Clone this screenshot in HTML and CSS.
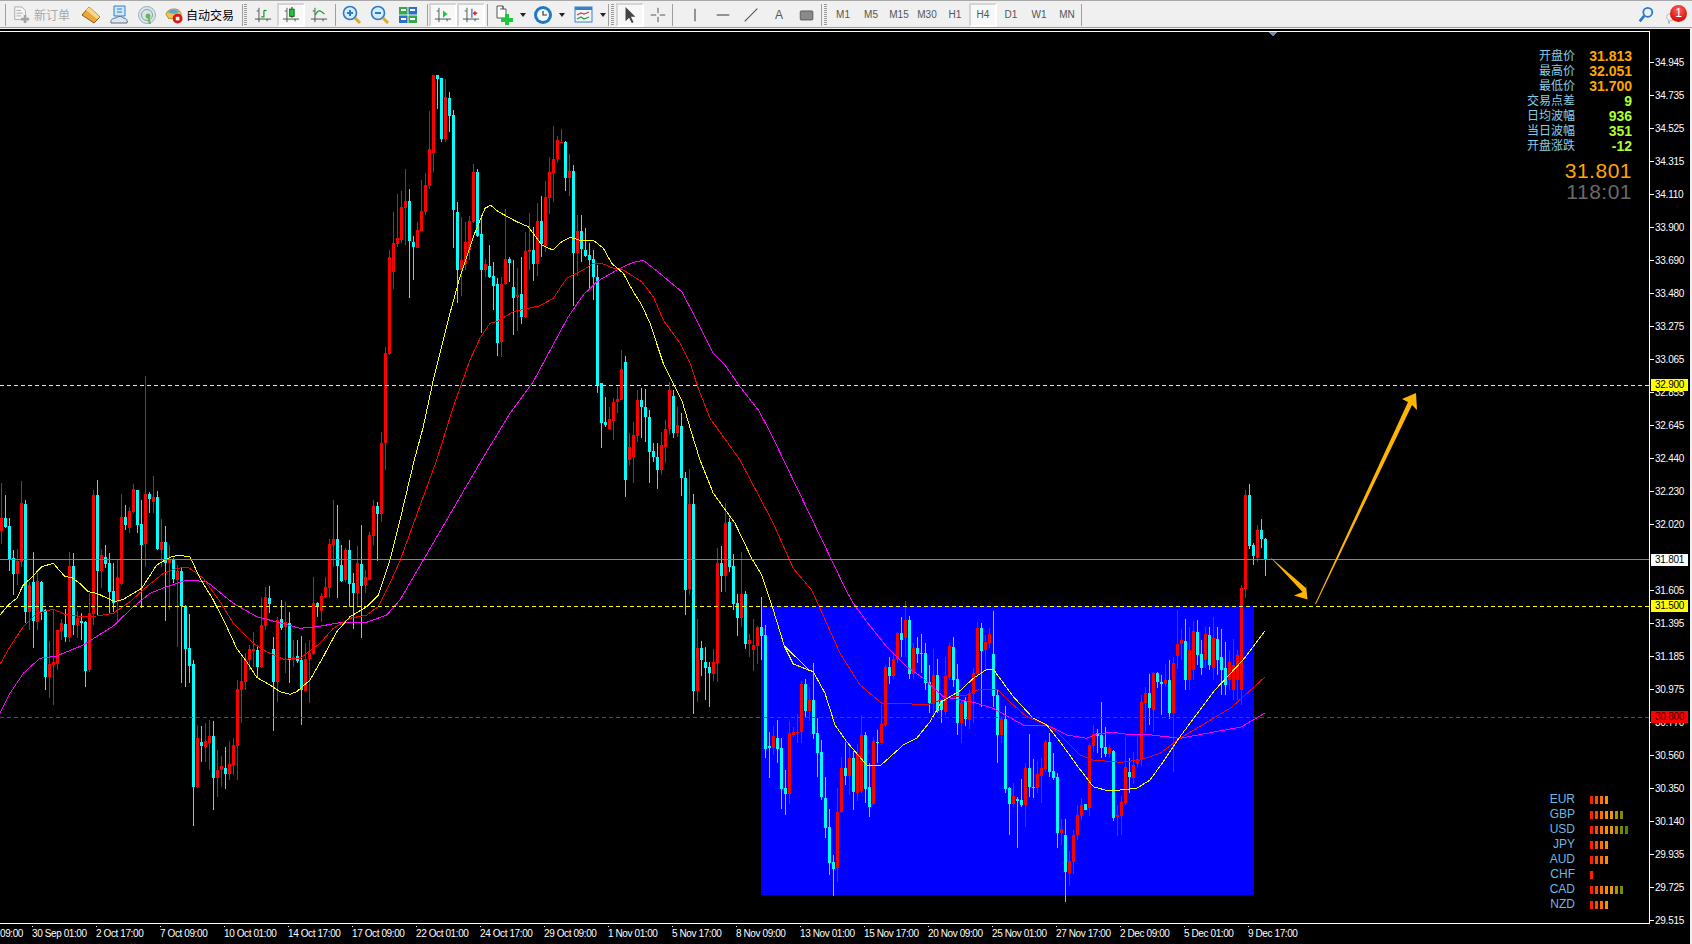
FILE: index.html
```html
<!DOCTYPE html>
<html lang="zh">
<head>
<meta charset="utf-8">
<title>XAG H4</title>
<link rel="stylesheet" href="styles.css">
</head>
<body>
<svg class="defs" width="0" height="0">
  <symbol id="axes" viewBox="0 0 20 20"><path d="M5.5 2V18M1 14.5H19M3 5.5H5M14.5 14.5V17" fill="none" stroke="#3c4a44" stroke-width="1"/></symbol>
</svg>
<header class="toolbar">
  <i class="sep"></i>
  <div class="btn btn-new">
    <svg class="ic" viewBox="0 0 20 20"><path d="M3 1H11L15 5V15H3Z" fill="#f4f4f4" stroke="#a8a8a8"/><path d="M5 5H10M5 8H12M5 11H10" stroke="#a8a8a8"/><path d="M13 10H16V13H19V16H16V19H13V16H10V13H13Z" fill="#a4a4a4"/></svg>
    <span class="cap cap-off">新订单</span>
  </div>
  <div class="btn"><svg class="ic ic-l" viewBox="0 0 20 20"><path d="M1 10L8 2L19 12L13 18Z" fill="#e9a93a" stroke="#8a5a16"/><path d="M8 2L19 12L16 14L5 5Z" fill="#f8d88a"/></svg></div>
  <div class="btn"><svg class="ic ic-l" viewBox="0 0 20 20"><path d="M5 1H16V11H5Z" fill="#cfe6fb" stroke="#2f7fd0"/><path d="M8 4H13M8 7H13" stroke="#2f7fd0"/><path d="M2 18C1 14 5 13 7 13C9 11 13 11 14 13C17 13 19 15 18 18Z" fill="#dfe6ee" stroke="#55708f"/></svg></div>
  <div class="btn"><svg class="ic ic-l" viewBox="0 0 20 20"><circle cx="10" cy="10" r="8.5" fill="#dce6e6" stroke="#9ab0b8"/><circle cx="10" cy="10" r="5.5" fill="none" stroke="#6fa6b8"/><circle cx="11" cy="11" r="2.5" fill="#6cb65a"/><path d="M11 11L13 19" stroke="#6cb65a" stroke-width="2"/></svg></div>
  <div class="btn btn-auto">
    <svg class="ic" viewBox="0 0 20 20"><path d="M1 9C3 2 15 1 18 8L17 14H4Z" fill="#f0c24a" stroke="#b4862a"/><path d="M3 7C6 3 13 3 16 7C12 9 7 9 3 7Z" fill="#5aa6d8"/><circle cx="14" cy="14" r="5.5" fill="#d81a10"/><rect x="12" y="12" width="4" height="4" fill="#fff"/></svg>
    <span class="cap">自动交易</span>
  </div>
  <i class="sep sep-b"></i><i class="grip grip-a"></i>
  <div class="btn"><svg class="ic" viewBox="0 0 20 20"><use href="#axes"/><path d="M11 5V12H8" fill="none" stroke="#12a02a" stroke-width="1.4"/><path d="M11 5H14" stroke="#12a02a" stroke-width="1.4"/></svg></div>
  <div class="btn on"><svg class="ic" viewBox="0 0 20 20"><use href="#axes"/><path d="M11 1V13" stroke="#111"/><rect x="8.5" y="3.5" width="5" height="8" fill="#1fc83a" stroke="#0a5a18"/></svg></div>
  <div class="btn"><svg class="ic" viewBox="0 0 20 20"><use href="#axes"/><path d="M6 10C9 3 12 5 16 9" fill="none" stroke="#1f9a3a" stroke-width="1.4"/></svg></div>
  <i class="sep sep-m"></i>
  <div class="btn btn-l"><svg class="ic ic-l" viewBox="0 0 20 20"><circle cx="8" cy="8" r="6.5" fill="#d6ecff" stroke="#2c7cc8" stroke-width="1.6"/><path d="M5 8H11M8 5V11" stroke="#2c7cc8" stroke-width="2"/><path d="M13 13L18 18" stroke="#d8ac2c" stroke-width="3"/></svg></div>
  <div class="btn"><svg class="ic ic-l" viewBox="0 0 20 20"><circle cx="8" cy="8" r="6.5" fill="#d6ecff" stroke="#2c7cc8" stroke-width="1.6"/><path d="M5 8H11" stroke="#2c7cc8" stroke-width="2"/><path d="M13 13L18 18" stroke="#d8ac2c" stroke-width="3"/></svg></div>
  <div class="btn"><svg class="ic ic-l" viewBox="0 0 20 20"><rect x="1" y="2" width="8.5" height="7.5" fill="#35a84a"/><rect x="10.5" y="2" width="8.5" height="7.5" fill="#2a6fd0"/><rect x="1" y="10.5" width="8.5" height="7.5" fill="#2a6fd0"/><rect x="10.5" y="10.5" width="8.5" height="7.5" fill="#35a84a"/><path d="M3 5H8M12 5H17M3 14H8M12 14H17" stroke="#fff" stroke-width="2"/></svg></div>
  <i class="sep sep-w"></i>
  <div class="btn on"><svg class="ic" viewBox="0 0 20 20"><use href="#axes"/><path d="M10 5L15 9L10 13Z" fill="#1ec83a"/></svg></div>
  <div class="btn on"><svg class="ic" viewBox="0 0 20 20"><use href="#axes"/><path d="M11 3V13" stroke="#2a6fd0" stroke-width="1.4"/><path d="M17 8H13M15 6L13 8L15 10" fill="none" stroke="#e0261a" stroke-width="1.6"/></svg></div>
  <i class="sep sep-m"></i>
  <div class="btn btn-l"><svg class="ic ic-l" viewBox="0 0 20 20"><path d="M3 1H9V4H12V13H3Z" fill="#fff" stroke="#555"/><path d="M6 4H9V1" fill="none" stroke="#555"/><path d="M11 9H15V13H19V17H15V20H11V17H7V13H11Z" fill="#1ec83a"/></svg></div><i class="drop"></i>
  <div class="btn btn-clock"><svg class="ic ic-l" viewBox="0 0 20 20"><circle cx="10" cy="10" r="9" fill="#1f78c8"/><circle cx="10" cy="10" r="6" fill="#f4f8fc"/><path d="M10 6V10H14" fill="none" stroke="#333" stroke-width="1.2"/></svg></div><i class="drop"></i>
  <div class="btn btn-tpl"><svg class="ic ic-l" viewBox="0 0 20 20"><rect x="1" y="2" width="17" height="15" fill="#eef5fc" stroke="#3a80c8"/><rect x="1" y="2" width="17" height="3" fill="#3a80c8"/><path d="M3 10L7 8L10 9L15 7" fill="none" stroke="#d8402a" stroke-width="1.3"/><path d="M3 14L7 12L10 14L15 12" fill="none" stroke="#2a9a3a" stroke-width="1.3"/></svg></div><i class="drop"></i>
  <i class="sep"></i><i class="grip grip-b"></i>
  <div class="btn on"><svg class="ic" viewBox="0 0 20 20"><path d="M5 1V17L9 13L12 19L14 18L11 12H16Z" fill="#444"/></svg></div>
  <div class="btn"><svg class="ic" viewBox="0 0 20 20"><path d="M10 2V8M10 12V18M2 10H8M12 10H18" stroke="#444" stroke-width="1"/></svg></div>
  <i class="sep"></i>
  <div class="btn btn-t"><svg class="ic" viewBox="0 0 20 20"><path d="M10 3V17" stroke="#444" stroke-width="1.2"/></svg></div>
  <div class="btn"><svg class="ic" viewBox="0 0 20 20"><path d="M3 10H17" stroke="#444" stroke-width="1.2"/></svg></div>
  <div class="btn"><svg class="ic" viewBox="0 0 20 20"><path d="M3 17L17 3" stroke="#555" stroke-width="1.2"/></svg></div>
  <div class="btn tf tf-a">A</div>
  <div class="btn"><svg class="ic" viewBox="0 0 20 20"><rect x="2.5" y="5.5" width="14" height="10" rx="1" fill="#8a8a8a" stroke="#555"/></svg></div>
  <i class="sep"></i><i class="grip grip-b"></i>
  <div class="btn tf">M1</div>
  <div class="btn tf">M5</div>
  <div class="btn tf">M15</div>
  <div class="btn tf">M30</div>
  <div class="btn tf">H1</div>
  <div class="btn tf on">H4</div>
  <div class="btn tf">D1</div>
  <div class="btn tf">W1</div>
  <div class="btn tf">MN</div>
  <i class="sep"></i>
  <div class="tools-right">
    <svg class="ic" viewBox="0 0 20 20"><circle cx="12" cy="7" r="5" fill="#e8f3fc" stroke="#2a78c8" stroke-width="2"/><path d="M8 11L3 17" stroke="#2a78c8" stroke-width="3"/></svg>
    <div class="notify">
      <svg class="bubble" viewBox="0 0 20 20"><path d="M2 10C2 5 17 5 17 10C17 14 9 15 6 15L5 19L4 14C3 13 2 12 2 10Z" fill="#f2f2f2" stroke="#aaa"/></svg>
      <b class="badge">1</b>
    </div>
  </div>
</header>
<div class="gapline"></div>
<main class="terminal">
  <div class="chart-row">
    <div class="plot">
      <svg id="chart" class="canvas" width="1649" height="891" viewBox="0 32 1649 891" shape-rendering="crispEdges">
        <rect x="761" y="606" width="493" height="289" fill="#0000ff"/>
        <path id="wick-c" fill="#00ffff"/>
        <path id="wick-r" fill="#ff0000"/>
        <polyline id="ma-mag" class="ma" stroke="#ff00ff"/>
        <polyline id="ma-red" class="ma" stroke="#ff0000"/>
        <polyline id="ma-yel" class="ma" stroke="#ffff00"/>
        <path d="M0 559.5H1649" stroke="#778899"/>
        <path d="M0 385.5H1649M0 606.5H1649" stroke="#ffff00" stroke-dasharray="4 3"/>
        <path d="M0 717.5H1649" stroke="#e01010" stroke-dasharray="4 3"/>
        <polygon points="1269,32 1277,32 1273,37" fill="#778899"/>
        <g shape-rendering="auto" fill="#ffb400">
          <polygon points="1270,557 1306,588 1305.5,580 1307.5,599.5 1294,595.5 1302.5,592"/>
          <polygon points="1315,604 1408,402 1402,399 1416,393 1417,410 1412,405 1316,604"/>
        </g>
      </svg>
      <section class="info">
        <span class="k">开盘价</span><span class="v o">31.813</span>
        <span class="k">最高价</span><span class="v o">32.051</span>
        <span class="k">最低价</span><span class="v o">31.700</span>
        <span class="k">交易点差</span><span class="v g">9</span>
        <span class="k">日均波幅</span><span class="v g">936</span>
        <span class="k">当日波幅</span><span class="v g">351</span>
        <span class="k">开盘涨跌</span><span class="v g">-12</span>
        <span class="big bid">31.801</span>
        <span class="big timer">118:01</span>
      </section>
      <section class="strength">
        <span class="cur">EUR</span><span class="bars"><i class="b1"></i><i class="b2"></i><i class="b3"></i><i class="b4"></i></span>
        <span class="cur">GBP</span><span class="bars"><i class="b1"></i><i class="b2"></i><i class="b3"></i><i class="b4"></i><i class="b5"></i><i class="b6"></i><i class="b7"></i></span>
        <span class="cur">USD</span><span class="bars"><i class="b1"></i><i class="b2"></i><i class="b3"></i><i class="b4"></i><i class="b5"></i><i class="b6"></i><i class="b7"></i><i class="b8"></i></span>
        <span class="cur">JPY</span><span class="bars"><i class="b1"></i><i class="b2"></i><i class="b3"></i><i class="b4"></i></span>
        <span class="cur">AUD</span><span class="bars"><i class="b1"></i><i class="b2"></i><i class="b3"></i><i class="b4"></i></span>
        <span class="cur">CHF</span><span class="bars"><i class="b1"></i></span>
        <span class="cur">CAD</span><span class="bars"><i class="b1"></i><i class="b2"></i><i class="b3"></i><i class="b4"></i><i class="b5"></i><i class="b6"></i><i class="b7"></i></span>
        <span class="cur">NZD</span><span class="bars"><i class="b1"></i><i class="b2"></i><i class="b3"></i><i class="b4"></i></span>
      </section>
    </div>
    <aside class="price-axis">
      <span>34.945</span><span>34.735</span><span>34.525</span><span>34.315</span><span>34.110</span><span>33.900</span><span>33.690</span><span>33.480</span><span>33.275</span><span>33.065</span><span>32.855</span><span>32.645</span><span>32.440</span><span>32.230</span><span>32.020</span><span class="blank"></span><span>31.605</span><span>31.395</span><span>31.185</span><span>30.975</span><span>30.770</span><span>30.560</span><span>30.350</span><span>30.140</span><span>29.935</span><span>29.725</span><span>29.515</span>
      <b class="tag tag-y t1">32.900</b>
      <b class="tag tag-w t2">31.801</b>
      <b class="tag tag-y t3">31.500</b>
      <b class="tag tag-r t4">30.800</b>
    </aside>
  </div>
  <footer class="time-axis">
    <span class="first">09:00</span><span>30 Sep 01:00</span><span>2 Oct 17:00</span><span>7 Oct 09:00</span><span>10 Oct 01:00</span><span>14 Oct 17:00</span><span>17 Oct 09:00</span><span>22 Oct 01:00</span><span>24 Oct 17:00</span><span>29 Oct 09:00</span><span>1 Nov 01:00</span><span>5 Nov 17:00</span><span>8 Nov 09:00</span><span>13 Nov 01:00</span><span>15 Nov 17:00</span><span>20 Nov 09:00</span><span>25 Nov 01:00</span><span>27 Nov 17:00</span><span>2 Dec 09:00</span><span>5 Dec 01:00</span><span>9 Dec 17:00</span>
  </footer>
</main>
<script src="chart.js"></script>
</body>
</html>
```
FILE: styles.css
```css
* { box-sizing: border-box; }
html, body { margin: 0; height: 100%; overflow: hidden; }
body { background: #f0f0f0; font-family: "Liberation Sans", "Noto Sans CJK SC", sans-serif; }
.defs { position: absolute; }

.toolbar { height: 28px; display: flex; align-items: center; padding: 1px 0 0 5px; background: #f0f0f0; border-top: 1px solid #a8a8a8; border-bottom: 1px solid #9c9c9c; }
.sep { flex: none; width: 1px; height: 22px; background: #a0a0a0; }
.sep-b { margin-left: 4px; }
.sep-m { margin-left: 2px; }
.sep-w { margin-left: 5px; margin-right: 1px; }
.grip { flex: none; width: 3px; height: 22px; margin: 0 2px 0 3px; background: repeating-linear-gradient(#9a9a9a 0 1px, #f0f0f0 1px 2px); }
.grip-a { margin-left: 1px; }
.grip-b { margin-left: 2px; }
.btn { flex: none; width: 28px; height: 24px; display: flex; align-items: center; justify-content: center; }
.btn.on { background: #f8f8f8; border: 2px solid; border-color: #d4d4d4 #fff #fff #d4d4d4; }
.btn-new { width: 71px; justify-content: flex-start; padding-left: 6px; gap: 4px; }
.btn-auto { width: 77px; justify-content: flex-start; padding-left: 4px; gap: 3px; }
.btn-l { margin-left: 2px; }
.btn-clock { margin-left: 1px; }
.btn-tpl { margin-left: 3px; }
.btn-t { margin-left: 8px; }
.ic { width: 18px; height: 18px; flex: none; }
.ic-l { width: 20px; height: 20px; }
.cap { font-size: 12px; color: #000; white-space: nowrap; }
.cap-off { color: #a8a8a8; }
.drop { flex: none; width: 0; height: 0; margin: 0 2px; border: 3px solid transparent; border-top: 4px solid #222; border-bottom: 0; }
.tf { font-size: 10px; color: #555; }
.tf-a { font-size: 12px; }
.tools-right { margin-left: auto; margin-right: 3px; display: flex; align-items: center; gap: 10px; }
.notify { position: relative; width: 24px; height: 20px; }
.bubble { position: absolute; left: 0; top: 3px; width: 16px; height: 17px; }
.badge { position: absolute; left: 5px; top: 0; width: 17px; height: 17px; border-radius: 50%; background: radial-gradient(circle at 50% 30%, #f66, #d81408 70%); color: #fff; font: 12px/17px "Liberation Sans", sans-serif; text-align: center; }

.gapline { height: 1px; background: #f0f0f0; }
.terminal { width: 1690px; height: 915px; background: #000; padding-top: 2px; display: flex; flex-direction: column; }
.chart-row { display: flex; height: 893px; }
.plot { position: relative; width: 1649px; height: 893px; border-top: 1px solid #fff; border-bottom: 1px solid #fff; overflow: hidden; }
.canvas { display: block; }
.ma { fill: none; stroke-width: 1; }

.info { position: absolute; top: 17px; right: 17px; display: grid; grid-template-columns: auto 57px; grid-auto-rows: 15px; justify-items: end; align-items: center; line-height: 15px; white-space: nowrap; }
.k { font-size: 12px; color: #87ceeb; }
.v { font-size: 14px; font-weight: 700; }
.o { color: #ffa500; }
.g { color: #adff2f; }
.big { grid-column: 1 / -1; font-size: 21px; line-height: 21px; height: 21px; letter-spacing: 0.5px; }
.bid { color: #ffa500; margin-top: 18px; }
.timer { color: #696969; margin-top: 29px; }

.strength { position: absolute; bottom: 11px; right: 19px; display: grid; grid-template-columns: auto 40px; column-gap: 15px; grid-auto-rows: 15px; align-items: center; }
.cur { font-size: 12px; line-height: 15px; color: #6cb8e4; text-align: right; }
.bars { display: flex; gap: 2px; }
.bars i { width: 3px; height: 8px; }
.b1 { background: #ff2000; }
.b2 { background: #ff4c00; }
.b3 { background: #ff6e00; }
.b4 { background: #ff9000; }
.b5 { background: #e89800; }
.b6 { background: #b89000; }
.b7 { background: #808a00; }
.b8 { background: #4c8800; }

.price-axis { position: relative; width: 41px; height: 893px; padding-top: 24px; border-left: 1px solid #fff; display: flex; flex-direction: column; color: #fff; font-size: 10px; letter-spacing: -0.25px; }
.price-axis span { flex: none; height: 33px; line-height: 15px; padding-left: 5px; background: linear-gradient(#fff, #fff) 0 7px / 4px 1px no-repeat; white-space: nowrap; }
.price-axis span.blank { background: none; }
.tag { position: absolute; left: 1px; width: 37px; height: 12px; padding-left: 4px; font-weight: 400; line-height: 12px; color: #000; }
.tag-y { background: #ffff00; }
.tag-w { background: #fff; }
.tag-r { background: #ff0000; color: #400; }
.t1 { top: 348px; }
.t2 { top: 523px; }
.t3 { top: 569px; }
.t4 { top: 680px; }

.time-axis { height: 20px; display: flex; padding-top: 2px; color: #fff; font-size: 10px; letter-spacing: -0.4px; }
.time-axis span { flex: none; width: 64px; line-height: 16px; padding-left: 0; white-space: nowrap; background: linear-gradient(#fff, #fff) 0 -2px / 1px 3px no-repeat; }
.time-axis .first { width: 32px; background: none; }
```
FILE: chart.js
```js
// Candles are listed by the pixel rows read from the chart, one block per
// vertical origin (y0) and scale (s). Bar i sits at x = 1 + 4i.
const blocks = [
  { y0: 470, s: 3, bars: "r 38 143 183 222|c 75 143 172 175|c 145 168 268 302|c 240 264 312 375|r 238 272 312 345|r 33 99 275 290|c 90 101 426 458|r 335 345 426 480|c 246 336 452 533|r 310 333 456 480|c 333 336 425 450|c 418 420 621 660|r 513 582 621 684|r 420 576 585 706|r 480 480 582 600|r 448 460 484 510|c 418 462 501 515|r 246 288 501 515|c 250 288 465 495|r 423 444 465 505|c 430 452 458 510|c 454 456 603 650|r 370 430 600 605|r 60 75 432 465|c 30 75 303 438|r 238 255 303 355|c 225 261 282 295|c 250 279 366 430|c 280 363 398 425|r 270 321 396 455|r 72 141 342 345|c 105 141 165 180|r 110 123 174 190|r 42 57 126 130|c 60 60 165 190|c 90 162 225 415|r -282 72 222 290|c 65 72 87 130|r 18 81 96 128|c 62 81 237 240|r 148 216 240 290|c 168 216 279 452|r 225 270 279 420|c 265 268 328 340|r 285 303 330 530|c 295 303 408 640|c 405 408 537 650|c 432 534 588 640|c 570 582 951 1068|r 765 804 951 955|c 768 816 828 875|r 758 813 831 875|r 750 798 819 900|c 752 798 924 1020|r 840 900 924 980|r 858 888 900 950|c 830 894 912 958|r 812 882 912 930|r 805 825 885 915|r 630 657 828 930|r 560 633 660 760|r 550 570 636 660|r 525 537 570 600|r 485 537 543 590|c 525 540 591 625|r 380 465 591 595|r 350 381 468 480|c 348 384 402 430|c 500 537 636 782|r 440 450 636 695|c 390 447 474 480|r 395 456 471 610|c 425 459 570 640|r 510 560 570 590|c 510 558 573 580|c 498 570 660 765|r 520 567 663 665|r 510 549 567 700|r 322 399 552 555|c 395 399 412 440|r 370 378 423 455|r 322 351 381 385|r 208 222 354 385|r 90 207 225 290|c 105 207 288 385|c 225 285 333 335|r 235 240 330 335|c 210 240 342 410|c 310 339 369 478|r 228 279 369 412|c 165 282 348 505|r 300 321 345 370|r 185 195 330 330|r 90 108 198 225|c 95 108 132 272" },
  { y0: 60, s: 3, bars: "r 1115 1150 1362 1385|r 862 880 1150 1230|r 570 591 882 885|r 457 549 636 687|r 403 534 552 560|r 392 441 540 550|r 327 423 444 555|c 388 423 543 714|c 528 546 561 660|r 487 510 564 564|r 360 453 513 513|r 340 375 456 465|r 153 267 378 387|r 45 45 279 335|c 45 45 57 148|c 55 54 237 245|r 57 111 237 245|c 97 114 168 215|c 150 165 450 565|c 427 456 630 730|r 470 600 630 708|r 487 546 612 630|r 467 483 570 600|r 312 336 486 490|c 327 336 528 530|c 465 522 630 820|r 597 612 630 650|c 555 618 651 655|c 605 648 678 750|c 655 672 849 888|r 650 672 846 890|r 448 597 672 675|c 590 597 609 665|c 600 681 714 825|r 625 705 711 812|c 590 702 771 792|r 515 573 771 775|r 460 570 576 630|c 500 570 612 662|r 430 483 612 648|c 408 483 552 590|r 363 411 558 575|r 290 336 414 462|r 198 297 339 425|r 228 240 297 310|r 207 245 249 250|c 242 246 354 392|r 282 333 354 408|c 315 333 579 738|r 465 513 579 648|c 465 513 567 605|c 505 570 588 590|c 550 585 600 690|c 570 597 651 720|c 615 651 975 1000|c 970 970 1089 1165|c 1010 1086 1095 1100|r 1040 1077 1107 1110|r 1015 1026 1083 1140|r 980 1017 1026 1060|r 870 927 1020 1020|c 888 906 1260 1310|r 1120 1160 1200 1215|r 1087 1125 1191 1268|r 990 1020 1128 1145|c 985 1020 1040 1135|c 988 1040 1070 1145|c 1050 1071 1175 1268|c 1150 1173 1190 1205|c 1150 1190 1230 1288|r 1115 1155 1230 1245|r 1080 1107 1160 1208|r 965 990 1107 1125|c 990 1008 1118 1135|r 1040 1095 1118 1130|c 1060 1098 1253 1308" },
  { y0: 450, s: 3, bars: "c 66 84 420 495|r 57 162 417 435|c 132 162 723 792|r 507 594 723 756|c 573 594 630 678|c 591 636 654 750|c 636 651 669 770|r 597 636 672 692|r 293 339 639 696|c 288 339 378 426|r 160 219 378 426|c 205 216 351 366|c 312 348 462 480|c 432 459 504 558|r 306 432 504 530|c 423 432 582 597|r 552 570 582 620|r 507 585 600 663|r 528 531 588 642" },
  { y0: 590, s: 3, bars: "c 22 111 138 210|c 105 135 477 505|c 425 468 474 563|r 408 438 474 495|c 390 444 477 520|c 445 474 597 657|c 540 594 612 675|r 393 430 612 642|r 410 426 435 440|r 372 426 430 458|r 272 281 426 458|c 268 282 364 385|r 290 330 364 392|c 220 330 432 447|c 384 430 489 560|c 450 486 622 630|c 560 624 714 745|c 657 711 819 855|c 795 816 836 917|r 595 666 834 876|r 502 534 666 670|c 455 534 558 585|r 460 504 558 615|c 483 504 606 660|r 462 492 608 633|r 376 435 603 610|c 425 435 597 640|c 520 591 651 680|r 440 453 642 645|c 420 455 459 520|r 345 402 459 465|r 225 232 405 410|c 200 232 258 282|r 190 207 258 268|r 125 130 207 220|c 80 130 150 200|r 33 90 145 200|c 78 90 252 268|r 160 174 252 268|c 142 174 192 220|c 132 190 193 250|c 160 190 280 300|c 225 276 340 370|r 178 255 343 380|c 207 255 362 370|c 330 330 360 398|r 200 258 366 375|r 160 168 262 270|c 142 171 270 290|c 222 267 399 435|r 330 339 399 458|c 320 333 387 408|r 300 310 390 418|r 235 250 312 400|r 97 114 252 260|c 100 114 183 350|r 135 156 180 240|r 114 132 159 175|c 63 192 318 350|c 300 315 435 518|r 380 387 435 460|c 348 387 597 610|c 590 594 642 735|r 580 618 642 650|c 620 627 633 775|c 567 630 645 650|r 520 534 645 710|c 432 534 591 620|c 506 591 594 625|r 514 552 594 610|r 505 534 558 640|r 450 456 537 545|c 428 456 546 560|c 490 543 564 570|c 548 561 729 775|r 687 717 729 765|c 688 735 846 935|r 783 813 849 887|r 720 735 816 852|r 645 675 735 750|r 625 645 678 690|c 642 642 660 660|r 460 465 654 678|r 405 432 468 485|c 417 430 438 490|c 335 435 474 505|c 410 471 492 500|r 465 474 492 505|c 480 483 684 692|r 645 675 681 738|r 618 636 678 735|r 440 531 639 645|c 503 546 561 610|r 485 525 564 582|r 440 507 522 530|r 315 336 510 528|r 290 309 339 425|c 252 309 354 405|r 245 249 360 425|c 247 249 276 295|c 255 276 282 375|r 222 270 282 290|c 210 270 369 388|r 200 219 369 545|r 60 162 198 237" },
  { y0: 0, s: 1, bars: "r 629 640 644 660|c 619 641 680 690|r 627 650 680 690|r 621 631 670 680|c 620 632 655 665|c 640 654 668 675|r 627 634 660 668|c 627 635 665 670|r 617 638 668 680|c 627 639 660 675|c 629 657 670 695|c 642 668 685 695|r 650 662 680 690|r 639 665 690 700|r 650 655 680 700|r 585 588 690 705" },
  { y0: 460, s: 3, bars: "r 90 105 387 414|c 72 105 258 267|c 250 255 288 315|r 195 210 294 305|c 178 210 237 264|c 233 237 300 347" }
];

const paths = { r: "", c: "" };
let i = 0;
for (const { y0, s, bars } of blocks) {
  for (const bar of bars.split("|")) {
    const [kind, ...rest] = bar.split(" ");
    const [hi, top, bot, lo] = rest.map((v) => Math.round(y0 + Number(v) / s));
    const x = 1 + 4 * i;
    paths[kind] += `M${x} ${hi}h1V${lo}h-1zM${x - 1} ${top}h3V${Math.max(bot, top + 1)}h-3z`;
    i += 1;
  }
}
document.getElementById("wick-c").setAttribute("d", paths.c);
document.getElementById("wick-r").setAttribute("d", paths.r);

// Moving averages: runs of points, each with its crop origin.
const run = (x0, y0, s, pts) => pts.map(([x, y]) => [x0 + x / s, y0 + y / s]);
const lines = {
  "ma-yel": [
    ...run(0, 470, 3, [[0,435],[25,405],[50,385],[70,345],[95,322],[125,290],[160,280],[195,320],[215,322],[245,345],[265,365],[290,370],[345,395],[370,388],[425,355],[470,285],[510,262],[535,256],[570,260],[600,325],[640,390],[680,470],[710,535],[740,575],[770,622],[810,645],[840,665],[870,673],[890,665],[930,630],[970,560],[1010,485],[1050,440],[1100,410],[1135,375],[1170,270],[1200,150]]),
    ...run(370, 60, 3, [[133,1200],[160,1100],[190,960],[240,760],[270,650],[310,530],[345,445],[362,436],[385,455],[440,485],[475,500],[515,555],[548,570],[575,545],[600,532],[630,541],[670,541],[700,565],[725,610],[760,640],[790,695],[815,735],[840,790],[880,910],[935,1020],[965,1120],[990,1200]]),
    ...run(630, 450, 3, [[250,130],[315,220],[365,325],[395,375],[430,480],[465,595],[490,642],[540,662]]),
    ...run(760, 590, 3, [[75,170],[100,222],[160,245],[195,310],[225,405],[260,455],[320,525],[360,528],[430,465],[470,445],[510,395],[545,335],[600,302],[640,265],[680,238],[700,238],[760,320],[820,385],[860,405],[900,455],[950,525],[1000,590],[1035,600],[1080,600],[1130,595],[1170,570],[1210,515],[1260,440]]),
    [1215,690],[1243,660],[1265,631]
  ],
  "ma-red": [
    ...run(0, 470, 3, [[0,583],[30,530],[70,470],[110,430],[160,418],[195,433],[250,440],[290,438],[340,430],[390,395],[440,350],[490,310],[530,295],[565,292],[610,325],[660,395],[700,460],[760,520],[800,545],[850,568],[900,565],[960,520],[1000,475],[1050,445],[1100,435],[1135,410],[1170,340],[1200,272]]),
    ...run(370, 60, 3, [[200,1200],[250,1040],[300,900],[330,835],[360,790],[380,785],[430,755],[510,737],[550,715],[590,655],[640,630],[670,610],[695,610],[730,625],[760,630],[815,665],[850,710],[880,780],[930,850],[960,910],[985,985],[1020,1075],[1110,1200]]),
    ...run(630, 450, 3, [[430,220],[490,355],[540,415]]),
    ...run(760, 590, 3, [[155,0],[200,100],[240,190],[300,285],[365,340],[440,340],[470,344],[510,342],[555,325],[620,315],[660,297],[710,297],[760,345],[800,380],[860,405],[890,425],[960,495],[1000,510],[1080,517],[1140,510],[1200,490],[1260,445]]),
    [1232,707],[1265,677]
  ],
  "ma-mag": [
    ...run(0, 470, 3, [[0,730],[30,670],[70,610],[120,565],[170,558],[250,525],[340,468],[395,415],[450,370],[500,350],[560,330],[620,335],[700,400],[770,440],[840,458],[900,475],[950,470],[1020,458],[1100,457],[1160,435],[1200,390]]),
    ...run(370, 60, 3, [[335,1200],[420,1060],[490,965],[530,890],[595,770],[640,705],[680,665],[750,625],[790,607],[820,601],[875,645],[935,695],[975,770],[1030,880],[1065,915],[1110,980],[1165,1050],[1200,1115]]),
    ...run(760, 590, 3, [[258,0],[280,40],[320,95],[380,170],[440,230],[490,265],[550,320],[640,337],[700,355],[790,405],[860,405],[920,435],[980,445],[1010,432],[1060,427],[1100,433],[1160,433],[1200,438],[1260,445]]),
    [1241,727],[1265,713]
  ]
};
for (const [id, pts] of Object.entries(lines)) {
  document.getElementById(id).setAttribute("points", pts.map((p) => p.map((n) => n.toFixed(1)).join(",")).join(" "));
}
```
